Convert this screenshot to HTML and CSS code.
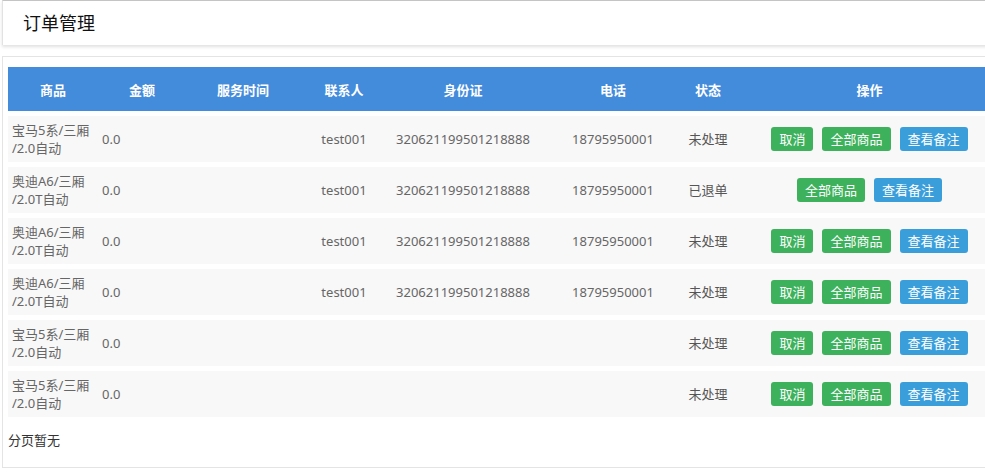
FILE: index.html
```html
<!DOCTYPE html>
<html lang="zh">
  <head>
    <meta charset="UTF-8" />
    <meta name="viewport" content="width=device-width, initial-scale=1.0" />
    <title>订单管理</title>
    <link rel="stylesheet" href="styles.css">
  </head>
  <body>
    <div class="page-head">订单管理</div>

    <div class="panel">
      <table class="orders">
        <colgroup>
          <col class="c-goods" />
          <col class="c-money" />
          <col class="c-time" />
          <col class="c-contact" />
          <col class="c-id" />
          <col class="c-phone" />
          <col class="c-state" />
          <col class="c-ops" />
        </colgroup>
        <thead>
          <tr>
            <th>商品</th>
            <th>金额</th>
            <th>服务时间</th>
            <th>联系人</th>
            <th>身份证</th>
            <th>电话</th>
            <th>状态</th>
            <th>操作</th>
          </tr>
        </thead>
        <tbody>
          <tr>
            <td class="left">宝马5系/三厢<br />/2.0自动</td>
            <td class="left">0.0</td>
            <td></td>
            <td>test001</td>
            <td>320621199501218888</td>
            <td>18795950001</td>
            <td class="state">未处理</td>
            <td>
              <div class="ops">
                <span class="btn green">取消</span>
                <span class="btn green">全部商品</span>
                <span class="btn blue">查看备注</span>
              </div>
            </td>
          </tr>
          <tr>
            <td class="left">奥迪A6/三厢<br />/2.0T自动</td>
            <td class="left">0.0</td>
            <td></td>
            <td>test001</td>
            <td>320621199501218888</td>
            <td>18795950001</td>
            <td class="state">已退单</td>
            <td>
              <div class="ops">
                <span class="btn green">全部商品</span>
                <span class="btn blue">查看备注</span>
              </div>
            </td>
          </tr>
          <tr>
            <td class="left">奥迪A6/三厢<br />/2.0T自动</td>
            <td class="left">0.0</td>
            <td></td>
            <td>test001</td>
            <td>320621199501218888</td>
            <td>18795950001</td>
            <td class="state">未处理</td>
            <td>
              <div class="ops">
                <span class="btn green">取消</span>
                <span class="btn green">全部商品</span>
                <span class="btn blue">查看备注</span>
              </div>
            </td>
          </tr>
          <tr>
            <td class="left">奥迪A6/三厢<br />/2.0T自动</td>
            <td class="left">0.0</td>
            <td></td>
            <td>test001</td>
            <td>320621199501218888</td>
            <td>18795950001</td>
            <td class="state">未处理</td>
            <td>
              <div class="ops">
                <span class="btn green">取消</span>
                <span class="btn green">全部商品</span>
                <span class="btn blue">查看备注</span>
              </div>
            </td>
          </tr>
          <tr>
            <td class="left">宝马5系/三厢<br />/2.0自动</td>
            <td class="left">0.0</td>
            <td></td>
            <td></td>
            <td></td>
            <td></td>
            <td class="state">未处理</td>
            <td>
              <div class="ops">
                <span class="btn green">取消</span>
                <span class="btn green">全部商品</span>
                <span class="btn blue">查看备注</span>
              </div>
            </td>
          </tr>
          <tr>
            <td class="left">宝马5系/三厢<br />/2.0自动</td>
            <td class="left">0.0</td>
            <td></td>
            <td></td>
            <td></td>
            <td></td>
            <td class="state">未处理</td>
            <td>
              <div class="ops">
                <span class="btn green">取消</span>
                <span class="btn green">全部商品</span>
                <span class="btn blue">查看备注</span>
              </div>
            </td>
          </tr>
        </tbody>
      </table>
      <div class="pager">分页暂无</div>
    </div>
  </body>
</html>
```

FILE: styles.css
```css
html,
body {
  overflow: hidden;
}
body {
  font-family: "Noto Sans", "Noto Sans CJK SC", sans-serif;
  margin: 0;
  padding: 0;
  background-color: #fff;
  color: #555;
}
.page-head {
  width: 1010px;
  height: 44px;
  margin-left: 2px;
  padding-left: 20px;
  line-height: 44px;
  font-size: 18px;
  color: #111;
  border-top: 1px solid #c4c4c4;
  border-left: 1px solid #e2e2e2;
  box-shadow: 0 2px 3px rgba(0, 0, 0, 0.12);
}
.panel {
  width: 1020px;
  margin: 11px 0 0 2px;
  padding: 5px 5px 17px 5px;
  border: 1px solid #e4e4e4;
  border-right: none;
}
.orders {
  width: 1003px;
  table-layout: fixed;
  border-collapse: separate;
  border-spacing: 0 5px;
  font-size: 13px;
}
.c-goods { width: 90px; }
.c-money { width: 88px; }
.c-time { width: 114px; }
.c-contact { width: 88px; }
.c-id { width: 150px; }
.c-phone { width: 150px; }
.c-state { width: 40px; }
.c-ops { width: 283px; }
.orders th {
  height: 44px;
  padding: 0;
  background-color: #438bdb;
  color: #fff;
  font-weight: bold;
  text-align: center;
}
.orders td {
  height: 46px;
  padding: 0 4px;
  background-color: #f8f8f8;
  text-align: center;
  line-height: 18px;
  color: #666;
}
.orders td.left {
  text-align: left;
}
.orders td.state {
  color: #555;
  padding: 0;
}
.ops {
  display: flex;
  justify-content: center;
  gap: 9px;
}
.btn {
  display: inline-block;
  height: 24px;
  line-height: 24px;
  padding: 0 8px;
  border-radius: 3px;
  color: #fff;
  font-size: 13px;
  cursor: pointer;
}
.green {
  background-color: #3db15c;
}
.blue {
  background-color: #3a9edb;
}
.pager {
  margin-top: 8px;
  font-size: 13px;
  line-height: 20px;
  color: #333;
}
```
